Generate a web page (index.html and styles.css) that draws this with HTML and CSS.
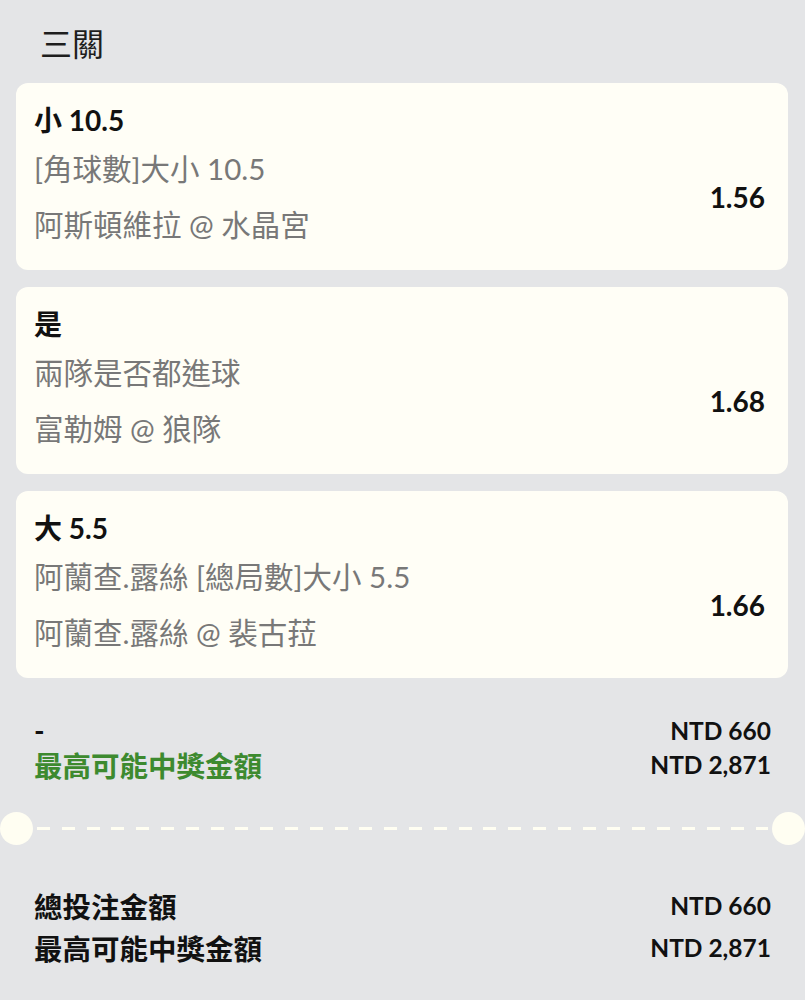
FILE: index.html
```html
<!DOCTYPE html>
<html lang="zh-Hant">
<head>
  <meta charset="UTF-8">
  <meta name="viewport" content="width=device-width, initial-scale=1.0">
  <title>三關</title>
  <link rel="stylesheet" href="styles.css">
</head>
<body>
  <div class="header">三關</div>

  <!-- Selections -->
  <div class="bet-list">
    <div class="bet-card">
      <div class="bet-pick">小 10.5</div>
      <div class="bet-row">
        <div class="bet-info">
          <div class="bet-market">[角球數]大小 10.5</div>
          <div class="bet-match">阿斯頓維拉 @ 水晶宮</div>
        </div>
        <div class="bet-odds">1.56</div>
      </div>
    </div>

    <div class="bet-card">
      <div class="bet-pick">是</div>
      <div class="bet-row">
        <div class="bet-info">
          <div class="bet-market">兩隊是否都進球</div>
          <div class="bet-match">富勒姆 @ 狼隊</div>
        </div>
        <div class="bet-odds">1.68</div>
      </div>
    </div>

    <div class="bet-card">
      <div class="bet-pick">大 5.5</div>
      <div class="bet-row">
        <div class="bet-info">
          <div class="bet-market">阿蘭查.露絲 [總局數]大小 5.5</div>
          <div class="bet-match">阿蘭查.露絲 @ 裴古菈</div>
        </div>
        <div class="bet-odds">1.66</div>
      </div>
    </div>
  </div>

  <!-- Stake -->
  <div class="stake">
    <div class="stake-row">
      <span class="label">-</span>
      <span class="amount">NTD 660</span>
    </div>
    <div class="stake-row">
      <span class="label green">最高可能中獎金額</span>
      <span class="amount">NTD 2,871</span>
    </div>
  </div>

  <div class="divider">
    <div class="notch"></div>
    <div class="dashes"></div>
    <div class="notch"></div>
  </div>

  <!-- Totals -->
  <div class="totals">
    <div class="total-row">
      <span class="label">總投注金額</span>
      <span class="amount">NTD 660</span>
    </div>
    <div class="total-row">
      <span class="label">最高可能中獎金額</span>
      <span class="amount">NTD 2,871</span>
    </div>
  </div>
</body>
</html>
```

FILE: styles.css
```css
body {
  margin: 0;
  background-color: #e4e5e7;
  font-family: Lato, "Noto Sans CJK TC", sans-serif;
  color: #111;
}
.header {
  padding: 22px 40px 17px;
  font-size: 32px;
  line-height: 44px;
  color: #1e1e1e;
}
.bet-list {
  display: flex;
  flex-direction: column;
  gap: 17px;
  padding: 0 17px 0 16px;
}
.bet-card {
  background-color: #fffef6;
  border-radius: 12px;
  padding: 18px 23px 25px 18px;
}
.bet-pick {
  font-size: 28px;
  font-weight: bold;
  line-height: 38px;
}
.bet-row {
  display: flex;
  align-items: center;
  justify-content: space-between;
  margin-top: 10px;
}
.bet-market,
.bet-match {
  font-size: 29.5px;
  line-height: 40px;
  color: #787878;
}
.bet-match { margin-top: 16px; }
.bet-odds {
  font-size: 28px;
  font-weight: bold;
}
.stake {
  padding: 35px 34px 0;
}
.stake-row,
.total-row {
  display: flex;
  justify-content: space-between;
  align-items: center;
  font-weight: bold;
  height: 34px;
}
.label { font-size: 28.5px; }
.amount { font-size: 24.5px; }
.green { color: #3d8a2f; }
.divider {
  display: flex;
  align-items: center;
  margin-top: 31px;
}
.notch {
  width: 33px;
  height: 33px;
  border-radius: 50%;
  background-color: #fffef2;
  flex-shrink: 0;
}
.dashes {
  flex: 1;
  height: 3px;
  margin: 0 4px;
  background: repeating-linear-gradient(to right, #fffef2 0 13px, transparent 13px 24.8px);
}
.totals {
  padding: 39px 34px 0;
}
.total-row { height: 42px; }
```
